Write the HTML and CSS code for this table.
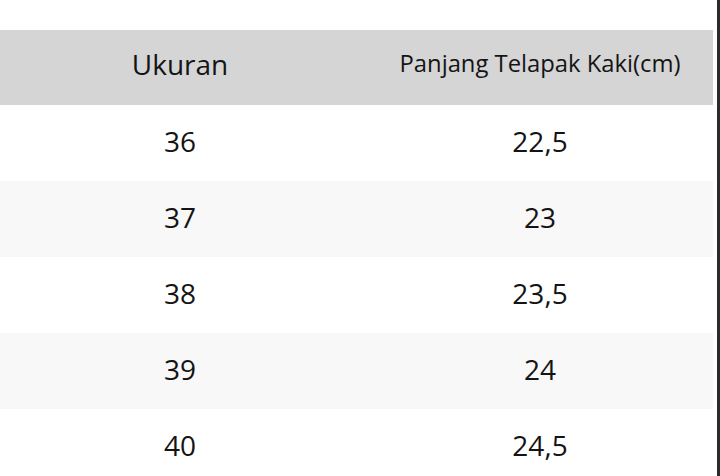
FILE: index.html
```html
<!DOCTYPE html>
<html lang="id">
<head>
<meta charset="utf-8">
<title>Ukuran</title>
<link rel="stylesheet" href="styles.css">
</head>
<body>
<div class="page">
  <div class="sheet">
    <div class="table">
      <div class="row head">
        <div class="cell c1 big">Ukuran</div>
        <div class="cell c2 small">Panjang Telapak Kaki(cm)</div>
      </div>
      <div class="row">
        <div class="cell c1">36</div>
        <div class="cell c2">22,5</div>
      </div>
      <div class="row alt">
        <div class="cell c1">37</div>
        <div class="cell c2">23</div>
      </div>
      <div class="row">
        <div class="cell c1">38</div>
        <div class="cell c2">23,5</div>
      </div>
      <div class="row alt">
        <div class="cell c1">39</div>
        <div class="cell c2">24</div>
      </div>
      <div class="row">
        <div class="cell c1">40</div>
        <div class="cell c2">24,5</div>
      </div>
    </div>
  </div>
  <div class="edge"></div>
</div>
</body>
</html>
```

FILE: styles.css
```css
html, body {
  margin: 0;
  padding: 0;
  background: #ffffff;
}
body {
  width: 720px;
  height: 476px;
  overflow: hidden;
  font-family: "Open Sans", "Noto Sans", sans-serif;
  color: #141414;
}
.page {
  display: flex;
  width: 720px;
  height: 476px;
}
.sheet {
  width: 713px;
  padding-top: 30px;
}
.edge {
  margin-left: 4px;
  width: 3px;
  height: 476px;
  background: #2b2b2b;
}
.table {
  display: flex;
  flex-direction: column;
}
.row {
  display: grid;
  grid-template-columns: 360px 1fr;
  height: 76px;
  align-items: center;
  background: #ffffff;
}
.row.head {
  height: 75px;
  background: #d5d5d5;
}
.row.alt {
  background: #f8f8f8;
}
.cell {
  text-align: center;
  font-size: 28px;
  line-height: 1;
  padding-bottom: 4px;
}
.head .cell {
  padding-bottom: 7px;
}
.c2 {
  padding-left: 7px;
}
.small {
  font-size: 23.8px;
}
```
